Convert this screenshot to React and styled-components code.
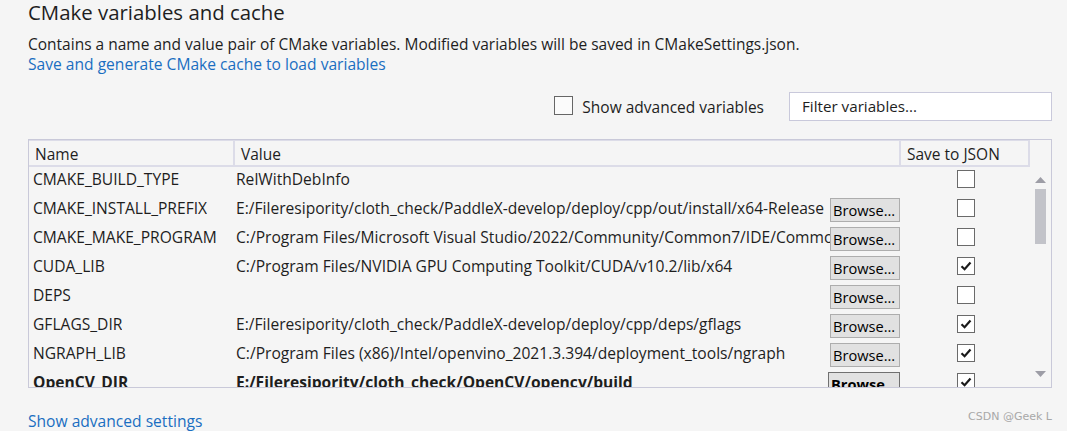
import React from 'react';
import styled, { createGlobalStyle } from 'styled-components';

const Global = createGlobalStyle`
  html, body { margin: 0; padding: 0; background: #f5f5f5; }
  body { font-family: "Open Sans", "Noto Sans", sans-serif; color: #1e1e1e; }
  * { box-sizing: border-box; }
`;

const Page = styled.div`
  width: 1067px;
  height: 431px;
  overflow: hidden;
  padding: 0 15px 0 28px;
  display: flex;
  flex-direction: column;
`;

const Title = styled.h1`
  margin: 0;
  font-size: 20.4px;
  line-height: 24px;
  font-weight: 400;
  color: #1e1e1e;
`;

const Desc = styled.div`
  margin-top: 10px;
  font-size: 15.5px;
  line-height: 20px;
`;

const Link = styled.a`
  display: block;
  color: #1a6ec1;
  font-size: 15.6px;
  line-height: 20px;
  text-decoration: none;
  cursor: pointer;
`;

const Controls = styled.div`
  margin-top: 18px;
  display: flex;
  justify-content: flex-end;
  align-items: center;
  height: 29px;
`;

const BigCheck = styled.span`
  width: 19px;
  height: 19px;
  border: 1px solid #666;
  background: #fbfbfb;
  display: inline-block;
  margin-top: -3px;
`;

const CheckLabel = styled.label`
  display: flex;
  align-items: center;
  gap: 9px;
  font-size: 15.5px;
  margin-right: 25px;
`;

const Filter = styled.input`
  width: 263px;
  height: 29px;
  border: 1px solid #c9c9db;
  background: #fff;
  padding: 0 12px 2px;
  font: inherit;
  font-size: 15.2px;
  color: #1e1e1e;
  outline: none;
  &::placeholder { color: #1e1e1e; opacity: 1; }
`;

const Frame = styled.div`
  margin-top: 18px;
  height: 250px;
  border: 1px solid #c9c9d9;
  display: flex;
  overflow: hidden;
`;

const Grid = styled.div`
  width: 1001px;
  display: grid;
  grid-template-columns: 206px 666px 129px;
  grid-auto-rows: 29px;
  grid-template-rows: 27px;
  align-content: start;
  overflow: hidden;
`;

const Head = styled.div`
  border-top: 1px solid #dcdce8;
  border-right: 2px solid #dcdce8;
  border-bottom: 2px solid #dcdce8;
  padding: 2px 0 0 6px;
  font-size: 15.5px;
  line-height: 22px;
  white-space: nowrap;
  overflow: hidden;
`;

const Cell = styled.div`
  min-width: 0;
  display: flex;
  align-items: flex-start;
  padding-left: ${p => p.$pad}px;
  font-size: 15.6px;
  line-height: 22px;
  font-weight: ${p => (p.$bold ? 700 : 400)};
  white-space: nowrap;
`;

const CenterCell = styled.div`
  display: flex;
  justify-content: center;
  padding-top: 3px;
`;

const ValueText = styled.span`
  flex: 1;
  min-width: 0;
  overflow: hidden;
  padding-top: 1px;
`;

const Browse = styled.button`
  flex: none;
  margin: 2px 1px 0 0;
  width: ${p => (p.$bold ? 72 : 70)}px;
  height: 24px;
  padding: 0 2px;
  text-align: left;
  background: #e1e1e1;
  border: 1px solid ${p => (p.$bold ? '#707070' : '#adadad')};
  font-family: inherit;
  font-size: 14.6px;
  font-weight: ${p => (p.$bold ? 700 : 400)};
  color: #000;
  line-height: 20px;
  overflow: hidden;
  white-space: nowrap;
`;

const NameText = styled.span`
  padding-top: 1px;
  overflow: hidden;
`;

const Box = styled.span`
  width: 18px;
  height: 18px;
  border: 1px solid #6a6a6a;
  background: #fff;
  display: flex;
  align-items: center;
  justify-content: center;
`;

const Scroll = styled.div`
  width: 21px;
  display: flex;
  flex-direction: column;
  align-items: center;
  padding: 37px 0 10px;
`;

const Arrow = styled.svg`
  display: block;
  flex: none;
`;

const Thumb = styled.div`
  margin-top: 6px;
  width: 11px;
  height: 55px;
  background: #c2c3c9;
`;

const Spacer = styled.div`
  flex: 1;
`;

const Footer = styled.div`
  margin-top: 23px;
  display: flex;
  justify-content: space-between;
  align-items: flex-start;
`;

const Mark = styled.span`
  font-family: "DejaVu Sans", sans-serif;
  font-size: 11px;
  color: #a8a8a8;
  line-height: 14px;
  margin-top: -1px;
`;

const rows = [
  { name: 'CMAKE_BUILD_TYPE', value: 'RelWithDebInfo', browse: false, checked: false },
  { name: 'CMAKE_INSTALL_PREFIX', value: 'E:/Fileresipority/cloth_check/PaddleX-develop/deploy/cpp/out/install/x64-Release', browse: true, checked: false },
  { name: 'CMAKE_MAKE_PROGRAM', value: 'C:/Program Files/Microsoft Visual Studio/2022/Community/Common7/IDE/CommonExtensions/Microsoft/CMake/Ninja/ninja.exe', browse: true, checked: false },
  { name: 'CUDA_LIB', value: 'C:/Program Files/NVIDIA GPU Computing Toolkit/CUDA/v10.2/lib/x64', browse: true, checked: true },
  { name: 'DEPS', value: '', browse: true, checked: false },
  { name: 'GFLAGS_DIR', value: 'E:/Fileresipority/cloth_check/PaddleX-develop/deploy/cpp/deps/gflags', browse: true, checked: true },
  { name: 'NGRAPH_LIB', value: 'C:/Program Files (x86)/Intel/openvino_2021.3.394/deployment_tools/ngraph', browse: true, checked: true },
  { name: 'OpenCV_DIR', value: 'E:/Fileresipority/cloth_check/OpenCV/opencv/build', browse: true, checked: true, bold: true },
];

const Check = ({ on }) => (
  <Box>
    {on && (
      <svg width="14" height="14" viewBox="0 0 14 14">
        <path d="M2.5 7.2 L5.6 10.2 L11.5 3.6" fill="none" stroke="#1a1a1a" strokeWidth="2.2" />
      </svg>
    )}
  </Box>
);

export default function App() {
  return (
    <>
      <Global />
      <Page>
        <Title>CMake variables and cache</Title>
        <Desc>Contains a name and value pair of CMake variables. Modified variables will be saved in CMakeSettings.json.</Desc>
        <Link>Save and generate CMake cache to load variables</Link>
        <Controls>
          <CheckLabel>
            <BigCheck />
            Show advanced variables
          </CheckLabel>
          <Filter placeholder="Filter variables..." />
        </Controls>
        <Frame>
          <Grid>
            <Head>Name</Head>
            <Head>Value</Head>
            <Head>Save to JSON</Head>
            {rows.map(r => (
              <React.Fragment key={r.name}>
                <Cell $pad={4} $bold={r.bold}>
                  <NameText>{r.name}</NameText>
                </Cell>
                <Cell $pad={1} $bold={r.bold}>
                  <ValueText>{r.value}</ValueText>
                  {r.browse && <Browse $bold={r.bold}>Browse...</Browse>}
                </Cell>
                <CenterCell>
                  <Check on={r.checked} />
                </CenterCell>
              </React.Fragment>
            ))}
          </Grid>
          <Scroll>
            <Arrow width="11" height="6" viewBox="0 0 11 6">
              <path d="M0 6 L5.5 0 L11 6 Z" fill="#9d9da6" />
            </Arrow>
            <Thumb />
            <Spacer />
            <Arrow width="11" height="6" viewBox="0 0 11 6">
              <path d="M0 0 L11 0 L5.5 6 Z" fill="#9d9da6" />
            </Arrow>
          </Scroll>
        </Frame>
        <Footer>
          <Link>Show advanced settings</Link>
          <Mark>CSDN @Geek L</Mark>
        </Footer>
      </Page>
    </>
  );
}
